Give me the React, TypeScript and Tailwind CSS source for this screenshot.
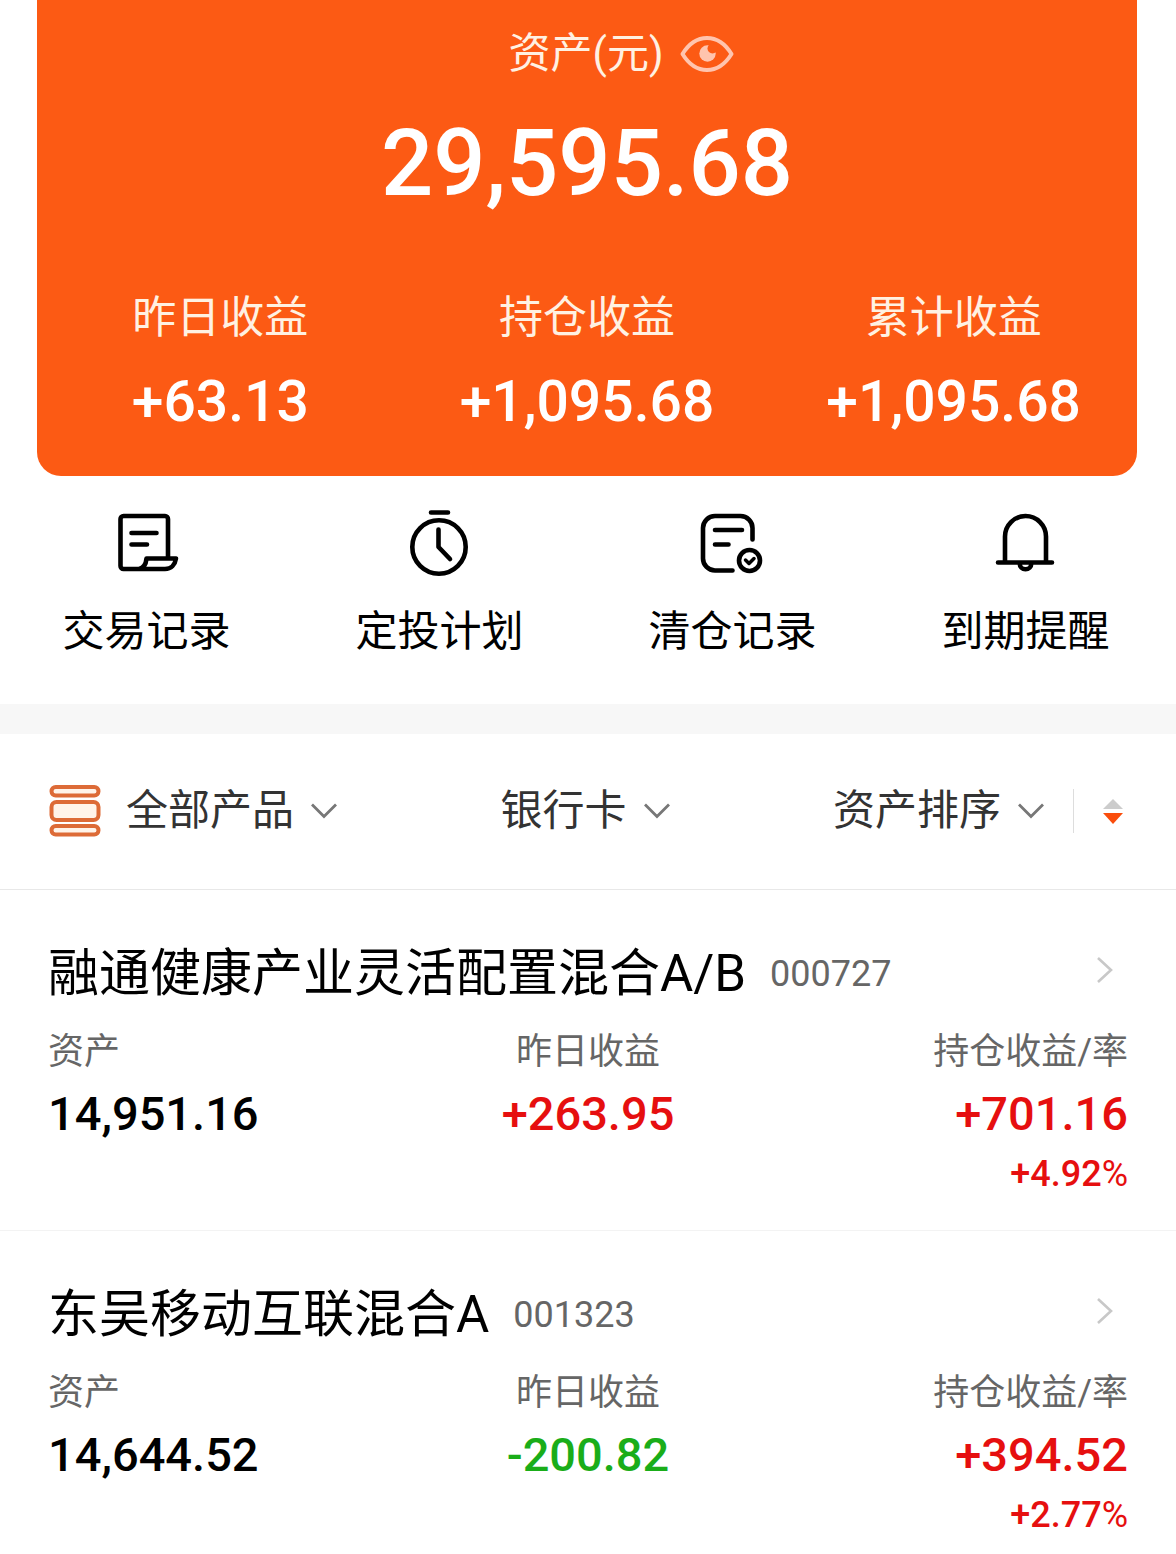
import type { ReactNode } from "react";
import clsx from "clsx";

const SUMMARY = [
  { label: "昨日收益", value: "+63.13" },
  { label: "持仓收益", value: "+1,095.68" },
  { label: "累计收益", value: "+1,095.68" },
];

const FUNDS = [
  {
    name: "融通健康产业灵活配置混合A/B",
    code: "000727",
    asset: "14,951.16",
    yesterday: "+263.95",
    profit: "+701.16",
    rate: "+4.92",
  },
  {
    name: "东吴移动互联混合A",
    code: "001323",
    asset: "14,644.52",
    yesterday: "-200.82",
    profit: "+394.52",
    rate: "+2.77",
  },
];

const ACTIONS = [
  { label: "交易记录", icon: <RecordIcon /> },
  { label: "定投计划", icon: <TimerIcon /> },
  { label: "清仓记录", icon: <ClearedIcon /> },
  { label: "到期提醒", icon: <BellIcon /> },
];

function ActionSvg({ children }: { children: ReactNode }) {
  return (
    <svg
      viewBox="0 0 68 68"
      className="h-[68px] w-[68px]"
      fill="none"
      stroke="currentColor"
      strokeWidth="4.6"
      strokeLinecap="round"
      strokeLinejoin="round"
      aria-hidden="true"
    >
      {children}
    </svg>
  );
}

function RecordIcon() {
  return (
    <ActionSvg>
      <path d="M55 48V9a3 3 0 0 0-3-3H10.500a3 3 0 0 0-3 3v47a3 3 0 0 0 3 3H52c6 0 10-4 11-10.500H33.500C33 54 30.500 58 26 59" />
      <path d="M18.500 23H43.500M18.500 34.500H34" />
    </ActionSvg>
  );
}

function TimerIcon() {
  return (
    <ActionSvg>
      <circle cx="33" cy="37" r="26.700" />
      <path d="M25 2.500H42M32.500 19.500V37l11.500 12" />
    </ActionSvg>
  );
}

function ClearedIcon() {
  return (
    <ActionSvg>
      <path d="M53.500 29.500V18A12 12 0 0 0 41.500 6H16A12 12 0 0 0 4 18v30.500a12 12 0 0 0 12 12h17.500" />
      <path d="M16 20H43M16 34.500H29.500" />
      <circle cx="50.500" cy="50.500" r="10.500" />
      <path d="M46.500 50l3.500 3.500 5-5" strokeWidth="3.500" />
    </ActionSvg>
  );
}

function BellIcon() {
  return (
    <ActionSvg>
      <path d="M13 51V26.500a20.500 20.500 0 0 1 41 0V51" />
      <path d="M6 52.500H60M27.700 53.500a5.800 5.800 0 0 0 11.600 0" />
    </ActionSvg>
  );
}

function EyeIcon() {
  return (
    <svg viewBox="0 0 54 38" className="h-[38px] w-[54px]" aria-hidden="true">
      <path
        d="M2.500 19C9 8.500 17 3 27 3s18 5.500 24.500 16C45 29.500 37 35 27 35S9 29.500 2.500 19Z"
        fill="none"
        stroke="#ffc4ae"
        strokeWidth="4"
        strokeLinejoin="round"
      />
      <circle cx="27.500" cy="18.500" r="8.200" fill="#ffc4ae" />
      <circle cx="32.500" cy="13.500" r="5" fill="#fc5a14" />
    </svg>
  );
}

function StackIcon() {
  return (
    <svg
      viewBox="0 0 54 54"
      className="h-[54px] w-[54px]"
      fill="#fff4ea"
      stroke="#dd6b37"
      strokeWidth="4"
      aria-hidden="true"
    >
      <rect x="3.500" y="3" width="47" height="8.500" rx="4.200" />
      <rect x="3.500" y="18" width="47" height="18" rx="5" />
      <rect x="3.500" y="42" width="47" height="8.500" rx="4.200" />
    </svg>
  );
}

function ChevronDown() {
  return (
    <svg viewBox="0 0 28 16" className="h-4 w-7" fill="none" stroke="#777" strokeWidth="2.800" aria-hidden="true">
      <path d="M2 1.500 14 13.500 26 1.500" />
    </svg>
  );
}

function FilterButton({ children }: { children: ReactNode }) {
  return (
    <button type="button" className="flex items-center gap-4 whitespace-nowrap text-[42px] leading-[60px] text-[#333]">
      {children}
      <ChevronDown />
    </button>
  );
}

function toneOf(value: string) {
  return value.startsWith("-") ? "text-[#1aad19]" : "text-[#e60f0f]";
}

function FundRow({ fund }: { fund: (typeof FUNDS)[number] }) {
  return (
    <li className="border-t border-[#f3f3f3] px-12 pb-[30px] pt-[50px] first:border-[#e8e8e8] last:pb-0">
      <a href={`#${fund.code}`} className="flex items-center whitespace-nowrap">
        <h2 className="text-[51px] leading-[68px] text-black">{fund.name}</h2>
        <span className="ml-6 text-[36px] leading-[68px] text-[#666]">{fund.code}</span>
        <svg
          viewBox="0 0 18 28"
          className="mb-2 ml-auto mr-[14px] h-7 w-[18px]"
          fill="none"
          stroke="#c8c8c8"
          strokeWidth="2.600"
          aria-hidden="true"
        >
          <path d="M2 2 15 14 2 26" />
        </svg>
      </a>
      <dl className="mt-4 grid grid-cols-3 whitespace-nowrap">
        <div>
          <dt className="text-[36px] leading-[56px] text-[#666]">资产</dt>
          <dd className="text-[47px] font-medium leading-[68px] text-black">{fund.asset}</dd>
        </div>
        <div className="text-center">
          <dt className="text-[36px] leading-[56px] text-[#666]">昨日收益</dt>
          <dd className={clsx("text-[47px] font-medium leading-[68px]", toneOf(fund.yesterday))}>{fund.yesterday}</dd>
        </div>
        <div className="text-right">
          <dt className="text-[36px] leading-[56px] text-[#666]">持仓收益/率</dt>
          <dd className={clsx("text-[47px] font-medium leading-[68px]", toneOf(fund.profit))}>{fund.profit}</dd>
          <dd className={clsx("text-[36px] font-medium leading-[52px]", toneOf(fund.rate))}>
            {fund.rate}
            <span className="font-normal">%</span>
          </dd>
        </div>
      </dl>
    </li>
  );
}

export default function App() {
  return (
    <main className="bg-white font-[Roboto,'Noto_Sans_CJK_SC',sans-serif]">
      <section className="ml-[37px] mr-[39px] rounded-b-3xl bg-[#fc5a14] pb-[38px] pt-6 text-white">
        <div className="flex items-center justify-center gap-4 pl-[68px]">
          <h1 className="text-[42px] leading-[60px] text-[#fff1e2]">资产(元)</h1>
          <button type="button" aria-label="隐藏金额">
            <EyeIcon />
          </button>
        </div>
        <p className="mt-5 text-center text-[92px] font-medium leading-[120px]">29,595.68</p>
        <dl className="mt-[62px] grid grid-cols-3 whitespace-nowrap text-center">
          {SUMMARY.map((item) => (
            <div key={item.label}>
              <dt className="text-[44px] leading-[64px] text-[#fff1e2]">{item.label}</dt>
              <dd className="mt-4 text-[57px] font-medium leading-[72px]">{item.value}</dd>
            </div>
          ))}
        </dl>
      </section>

      <nav className="grid grid-cols-4 pb-[42px] pr-1 pt-[34px]">
        {ACTIONS.map((action) => (
          <button
            key={action.label}
            type="button"
            className="flex flex-col items-center gap-6 whitespace-nowrap text-[42px] leading-[60px] text-black"
          >
            {action.icon}
            {action.label}
          </button>
        ))}
      </nav>

      <div className="h-[30px] bg-[#f7f7f7]" />

      <div className="flex items-center justify-between px-12 pb-12 pt-[47px]">
        <div className="flex items-center gap-6">
          <StackIcon />
          <FilterButton>全部产品</FilterButton>
        </div>
        <FilterButton>银行卡</FilterButton>
        <div className="flex items-center">
          <FilterButton>资产排序</FilterButton>
          <button type="button" aria-label="切换排序方向" className="ml-7 border-l border-[#ddd] py-2 pl-7 pr-1">
            <svg viewBox="0 0 22 28" className="h-7 w-[22px]" aria-hidden="true">
              <path d="M11 2 21 12H1Z" fill="#ccc" />
              <path d="M1 16h20L11 27Z" fill="#fa4d0c" />
            </svg>
          </button>
        </div>
      </div>

      <ul>
        {FUNDS.map((fund) => (
          <FundRow key={fund.code} fund={fund} />
        ))}
      </ul>
    </main>
  );
}
